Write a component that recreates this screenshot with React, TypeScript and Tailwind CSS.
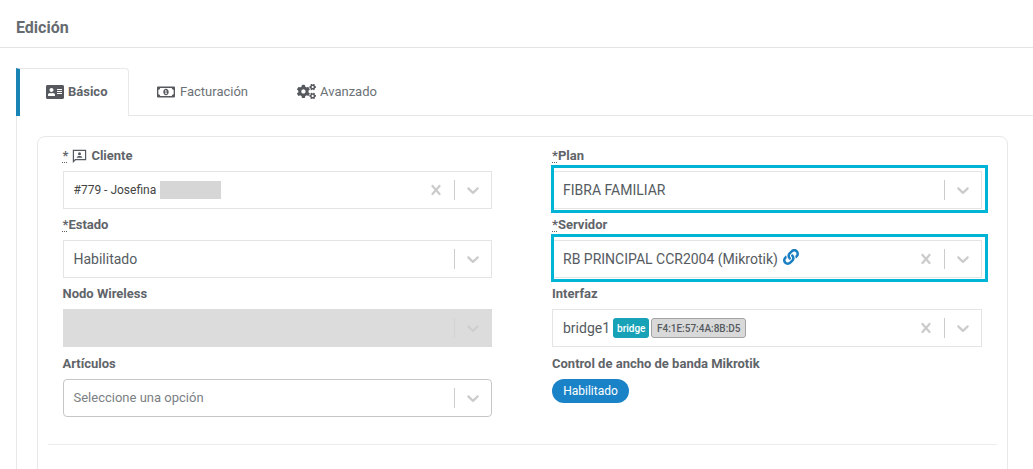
import type { ReactNode } from "react";
import { FaAddressCard, FaCogs, FaLink, FaRegMoneyBillAlt } from "react-icons/fa";

function ClearIcon() {
  return (
    <svg viewBox="0 0 20 20" className="w-5 h-5 fill-[#cccccc]">
      <path d="M14.348 14.849c-0.469 0.469-1.229 0.469-1.697 0l-2.651-3.030-2.651 3.029c-0.469 0.469-1.229 0.469-1.697 0-0.469-0.469-0.469-1.229 0-1.697l2.758-3.15-2.759-3.152c-0.469-0.469-0.469-1.228 0-1.697s1.228-0.469 1.697 0l2.652 3.031 2.651-3.031c0.469-0.469 1.228-0.469 1.697 0s0.469 1.229 0 1.697l-2.758 3.152 2.758 3.15c0.469 0.469 0.469 1.229 0 1.698z" />
    </svg>
  );
}

function ChevronIcon({ className }: { className: string }) {
  return (
    <svg viewBox="0 0 20 20" className={className}>
      <path d="M4.516 7.548c0.436-0.446 1.043-0.481 1.576 0l3.908 3.747 3.908-3.747c0.533-0.481 1.141-0.446 1.574 0 0.436 0.445 0.408 1.197 0 1.615-0.406 0.418-4.695 4.502-4.695 4.502-0.217 0.223-0.502 0.335-0.787 0.335s-0.57-0.112-0.789-0.335c0 0-4.287-4.084-4.695-4.502s-0.436-1.17 0-1.615z" />
    </svg>
  );
}

function ClientIcon() {
  return (
    <svg viewBox="0 0 16 16" className="w-[15px] h-[15px] fill-none stroke-[#555b61]">
      <path d="M1.5 2.5h13v10h-11l-2 2z" strokeWidth="1.3" />
      <circle cx="8" cy="6" r="1.6" className="fill-[#555b61] stroke-none" />
      <path d="M5 10.5c0-1.5 1.4-2 3-2s3 .5 3 2z" className="fill-[#555b61] stroke-none" />
    </svg>
  );
}

function Label({ children, className = "" }: { children: ReactNode; className?: string }) {
  return (
    <div className={`flex items-center gap-[4px] h-[31px] text-[13px] font-bold text-[#5f6469] ${className}`}>
      {children}
    </div>
  );
}

function Req({ children }: { children: ReactNode }) {
  return <span className="underline decoration-dotted decoration-[1px] underline-offset-2">{children}</span>;
}

function Select({
  children,
  clearable = false,
  disabled = false,
  rounded = false,
}: {
  children?: ReactNode;
  clearable?: boolean;
  disabled?: boolean;
  rounded?: boolean;
}) {
  const box = disabled
    ? "bg-[#dcdcdc] border-[#dcdcdc]"
    : rounded
      ? "bg-white border-[#c6c6c6] rounded"
      : "bg-white border-[#e4e4e4]";
  return (
    <div className={`flex items-center h-[38px] border ${box}`}>
      <div className="flex-1 flex items-center min-w-0 pl-[10px] text-[14px] text-[#555b61]">{children}</div>
      {clearable && (
        <div className="w-9 flex justify-center">
          <ClearIcon />
        </div>
      )}
      <div className={`w-px h-5 ${disabled ? "bg-[#d2d2d2]" : "bg-[#cccccc]"}`} />
      <div className="w-9 flex justify-center">
        <ChevronIcon className={`w-5 h-5 ${disabled ? "fill-[#cfcfcf]" : "fill-[#cccccc]"}`} />
      </div>
    </div>
  );
}

function Highlighted({ children }: { children: ReactNode }) {
  return (
    <div className="relative">
      {children}
      <div className="absolute -left-px -top-[6px] -right-[6px] -bottom-[4px] border-[3px] border-[#00b4d5] pointer-events-none" />
    </div>
  );
}

export default function App() {
  return (
    <div className="h-[469px] overflow-hidden bg-white font-['Roboto',sans-serif]">
      <div className="h-[48px] pl-4 pt-[18px] border-b border-[#e4e4e4]">
        <h1 className="text-[16px] leading-5 font-bold text-[#666b70]">Edición</h1>
      </div>

      <div className="pt-5 pl-4">
        {/* TABS */}
        <div className="flex h-[48px] text-[13px] text-[#6c7176]">
          <div className="flex items-center gap-[4px] w-[113px] pl-[26px] pb-px border-l-4 border-l-[#1a83b5] border-t border-r border-[#e8e8e8] rounded-tr font-bold text-[#5f6469]">
            <FaAddressCard className="w-[18px] h-[18px] text-[#55595e]" />
            Básico
          </div>
          <div className="flex-1 flex items-center border-b border-[#e8e8e8] pl-[28px]">
            <div className="flex items-center gap-[5px]">
              <FaRegMoneyBillAlt className="w-[18px] h-[18px] text-[#55595e]" />
              Facturación
            </div>
            <div className="flex items-center gap-[4px] ml-[49px]">
              <FaCogs className="w-[19px] h-[19px] text-[#55595e]" />
              Avanzado
            </div>
          </div>
        </div>

        {/* CONTENT */}
        <div className="border-l border-[#e8e8e8] pl-5 pt-5 pr-[25px]">
          <div className="border border-[#e8e8e8] rounded-lg px-[10px] pt-[3px]">
            <div className="grid grid-cols-[429.5px_430px] gap-x-[60px] pl-[14.5px] pr-[15px]">
              <div>
                <Label>
                  <Req>*</Req>
                  <ClientIcon />
                  Cliente
                </Label>
                <Select clearable>
                  <span className="text-[12px] text-[#444]">#779 - Josefina</span>
                  <span className="w-[61px] h-[18px] ml-[4px] bg-[#d6d6d6]" />
                </Select>
                <Label>
                  <span>
                    <Req>*</Req>Estado
                  </span>
                </Label>
                <Select>Habilitado</Select>
                <Label>Nodo Wireless</Label>
                <Select disabled />
                <Label className="h-[32px] pt-[2px]">Artículos</Label>
                <Select rounded>
                  <span className="text-[13px] text-[#7a7f84]">Seleccione una opción</span>
                </Select>
              </div>

              <div>
                <Label>
                  <span>
                    <Req>*</Req>Plan
                  </span>
                </Label>
                <Highlighted>
                  <Select>FIBRA FAMILIAR</Select>
                </Highlighted>
                <Label>
                  <span>
                    <Req>*</Req>Servidor
                  </span>
                </Label>
                <Highlighted>
                  <Select clearable>
                    RB PRINCIPAL CCR2004 (Mikrotik)
                    <FaLink className="w-4 h-4 ml-[5px] -mt-[5px] text-[#1a7fc1]" />
                  </Select>
                </Highlighted>
                <Label>Interfaz</Label>
                <Select clearable>
                  bridge1
                  <span className="flex items-center h-5 px-[4px] ml-[3px] rounded-[3px] bg-[#17a2b8] text-[10px] font-medium text-white">
                    bridge
                  </span>
                  <span className="flex items-center h-5 px-[4.5px] ml-[2px] rounded-[3px] border border-[#a3a3a3] bg-[#d9d9d9] text-[10px] font-medium text-[#555b61]">
                    F4:1E:57:4A:8B:D5
                  </span>
                </Select>
                <Label className="h-[32px] pt-[2px]">Control de ancho de banda Mikrotik</Label>
                <button className="block w-[77px] h-6 rounded-full bg-[#1a83c8] text-[12px] text-white">
                  Habilitado
                </button>
              </div>
            </div>

            <div className="mt-[27px] border-t border-[#ececec] pt-[21px]">
              <div className="grid grid-cols-[429px_430px] gap-x-[60px] px-[15px] text-[13px] font-bold text-[#5f6469]">
                <div>*Crédito</div>
                <div>*Crédito</div>
              </div>
            </div>
          </div>
        </div>
      </div>
    </div>
  );
}
